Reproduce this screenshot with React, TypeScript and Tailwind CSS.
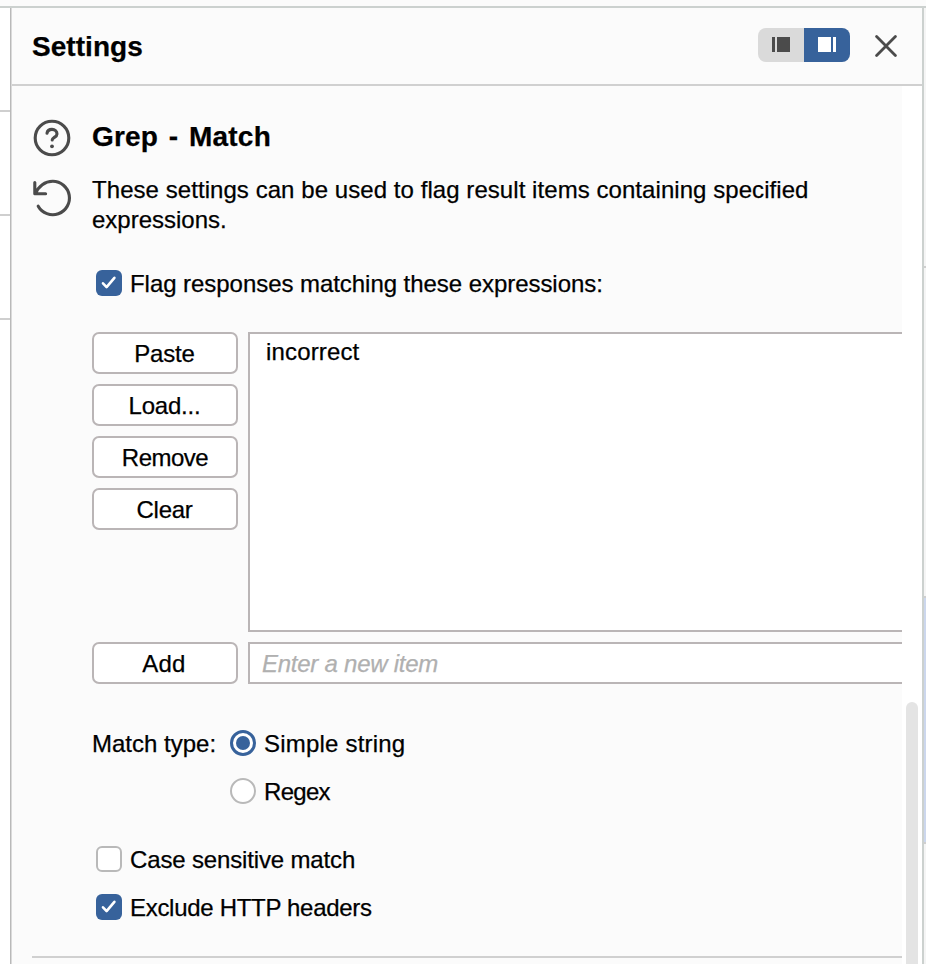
import type { ReactNode } from "react";

function Check({ checked, label, spacing }: { checked?: boolean; label: string; spacing: string }) {
  return (
    <label className="flex h-[26px] items-center gap-2 pl-1">
      <span
        className={
          checked
            ? "flex size-[26px] shrink-0 items-center justify-center rounded-[6px] bg-[#37629b]"
            : "size-[26px] shrink-0 rounded-[6px] border-2 border-[#b9b9b9] bg-white"
        }
      >
        {checked && (
          <svg width="26" height="26" viewBox="0 0 26 26" fill="none" stroke="white" strokeWidth="2.6" strokeLinecap="round" strokeLinejoin="round">
            <path d="M7 13.3 10.6 17.1 18.4 7.8" />
          </svg>
        )}
      </span>
      <span className={`pt-0.5 ${spacing}`}>{label}</span>
    </label>
  );
}

function Radio({ checked, label, spacing }: { checked?: boolean; label: string; spacing: string }) {
  return (
    <label className="flex h-[26px] items-center gap-2">
      <span
        className={
          checked
            ? "flex size-[26px] shrink-0 items-center justify-center rounded-full border-[3px] border-[#37629b] bg-white"
            : "size-[26px] shrink-0 rounded-full border-2 border-[#b9b9b9] bg-white"
        }
      >
        {checked && <span className="size-[14px] rounded-full bg-[#37629b]" />}
      </span>
      <span className={`pt-0.5 ${spacing}`}>{label}</span>
    </label>
  );
}

function Button({ children, spacing }: { children: ReactNode; spacing: string }) {
  return (
    <button className="flex h-[42px] w-[146px] shrink-0 items-center justify-center rounded-[7px] border-2 border-[#bab5b6] bg-white pt-px pr-px">
      <span className={spacing}>{children}</span>
    </button>
  );
}

export default function App() {
  return (
    <div className="flex h-[964px] w-[926px] flex-col overflow-hidden bg-[#fbfbfb] font-['Liberation_Sans',Arial,sans-serif] text-[24px] leading-[30px] text-black [-webkit-text-stroke:0.25px_currentColor]">
      <div className="h-2 shrink-0 border-b-2 border-[#ccd1cf]" />
      <div className="flex min-h-0 flex-1">
        <div className="w-2.5 shrink-0 bg-white">
          <div className="h-[104px] border-b-2 border-[#cfcfcf]" />
          <div className="h-[104px] border-b-2 border-[#cfcfcf]" />
          <div className="h-[104px] border-b-2 border-[#cfcfcf]" />
        </div>
        <div className="w-px shrink-0 bg-[#b9b9b9]" />
        <div className="w-px shrink-0 bg-[#dadada]" />

        <main className="flex w-[910px] shrink-0 flex-col">
          <header className="flex h-[78px] shrink-0 items-center border-b-2 border-[#d0d0d0] pl-5">
            <h1 className="pt-px text-[28px] font-bold tracking-[0.05px]">Settings</h1>
            <div className="mr-[25px] mb-[3px] ml-auto flex h-[34px] w-[92px] overflow-hidden rounded-[8px]">
              <div className="flex flex-1 items-center justify-center gap-[2px] bg-[#dadada] pb-px">
                <span className="h-[15px] w-[3px] bg-[#4b4b4b]" />
                <span className="h-[15px] w-[13px] bg-[#4b4b4b]" />
              </div>
              <div className="flex flex-1 items-center justify-center gap-[2px] bg-[#37629b] pb-px">
                <span className="h-[15px] w-[13px] bg-white" />
                <span className="h-[15px] w-[3px] bg-white" />
              </div>
            </div>
            <svg className="mr-[25px]" width="22" height="22" viewBox="0 0 22 22" fill="none" stroke="#4b4b4b" strokeWidth="2.8" strokeLinecap="round">
              <path d="M1.6 1.6 20.4 20.4M20.4 1.6 1.6 20.4" />
            </svg>
          </header>

          <div className="flex min-h-0 flex-1">
            <div className="w-[890px] shrink-0 overflow-hidden pl-5">
              <section className="flex h-[870px]">
                <div className="flex w-[60px] shrink-0 flex-col pt-8">
                  <svg width="40" height="40" viewBox="0 0 40 40" fill="none" stroke="#4b4b4b" strokeWidth="3.1" strokeLinecap="round" strokeLinejoin="round">
                    <circle cx="20" cy="20" r="16.8" />
                    <path d="M15 15.2C15.4 12.8 17.3 11.4 20 11.4C22.8 11.4 25 13.2 25 15.9C25 19.2 20.2 19.5 20.2 22" />
                    <circle cx="20" cy="28.3" r="1.9" fill="#4b4b4b" stroke="none" />
                  </svg>
                  <svg className="mt-5" width="40" height="40" viewBox="0 0 40 40" fill="none" stroke="#4b4b4b" strokeWidth="3.1" strokeLinecap="round" strokeLinejoin="round">
                    <path d="M2.8 4.5V15.8H13.6M3.6 15.4C6.4 8.2 12.9 3.3 20.7 3.3A16.7 16.7 0 1 1 6.2 28.2" />
                  </svg>
                </div>

                <div className="flex w-[810px] shrink-0 flex-col">
                  <h2 className="mt-9 text-[28px] font-bold tracking-[0.2px] [word-spacing:2.7px]">Grep - Match</h2>
                  <p className="mt-[23px]">
                    <span className="block tracking-[0.06px]">These settings can be used to flag result items containing specified</span>
                    <span className="block">expressions.</span>
                  </p>
                  <div className="mt-[35px]">
                    <Check checked label="Flag responses matching these expressions:" spacing="tracking-[-0.05px]" />
                  </div>

                  <div className="mt-9 flex gap-2.5">
                    <div className="flex flex-col gap-2.5">
                      <Button spacing="tracking-[-0.2px]">Paste</Button>
                      <Button spacing="tracking-[-0.2px]">Load...</Button>
                      <Button spacing="pl-px tracking-[-0.5px]">Remove</Button>
                      <Button spacing="tracking-[-0.3px]">Clear</Button>
                    </div>
                    <div className="h-[300px] flex-1 border-2 border-r-0 border-[#bab5b6] bg-white pt-[3px] pl-4 tracking-[0.15px]">
                      incorrect
                    </div>
                  </div>
                  <div className="mt-2.5 flex gap-2.5">
                    <Button spacing="pr-px tracking-[0.2px]">Add</Button>
                    <div className="flex h-[42px] flex-1 items-center border-2 border-r-0 border-[#bab5b6] bg-white pt-0.5 pl-3 tracking-[-0.25px] text-[#b0b0b0] italic">
                      Enter a new item
                    </div>
                  </div>

                  <div className="mt-[46px] flex">
                    <div className="flex h-[26px] w-[138px] items-center pt-0.5">Match type:</div>
                    <div className="flex flex-col gap-[22px]">
                      <Radio checked label="Simple string" spacing="tracking-[0.2px]" />
                      <Radio label="Regex" spacing="tracking-[-0.7px]" />
                    </div>
                  </div>
                  <div className="mt-[42px] flex flex-col gap-[22px]">
                    <Check label="Case sensitive match" spacing="tracking-[-0.15px]" />
                    <Check checked label="Exclude HTTP headers" spacing="tracking-[-0.3px]" />
                  </div>
                </div>
              </section>
              <div className="h-0.5 bg-[#d0d0d0]" />
            </div>
            <div className="flex flex-1 justify-end bg-white pt-[616px] pr-1">
              <div className="w-3 rounded-t-full bg-[#e4e4e4]" />
            </div>
          </div>
        </main>

        <div className="w-0.5 shrink-0 bg-[#ccd1cf]" />
        <div className="flex w-0.5 shrink-0 flex-col bg-[#f5f5f5]">
          <div className="h-[260px] shrink-0 border-b-2 border-[#cfcfcf]" />
          <div className="h-[330px] shrink-0 border-b-2 border-[#cfcfcf]" />
          <div className="h-[246px] shrink-0 border-b-2 border-[#cfcfcf] bg-[#ccd7ed]" />
        </div>
      </div>
    </div>
  );
}
